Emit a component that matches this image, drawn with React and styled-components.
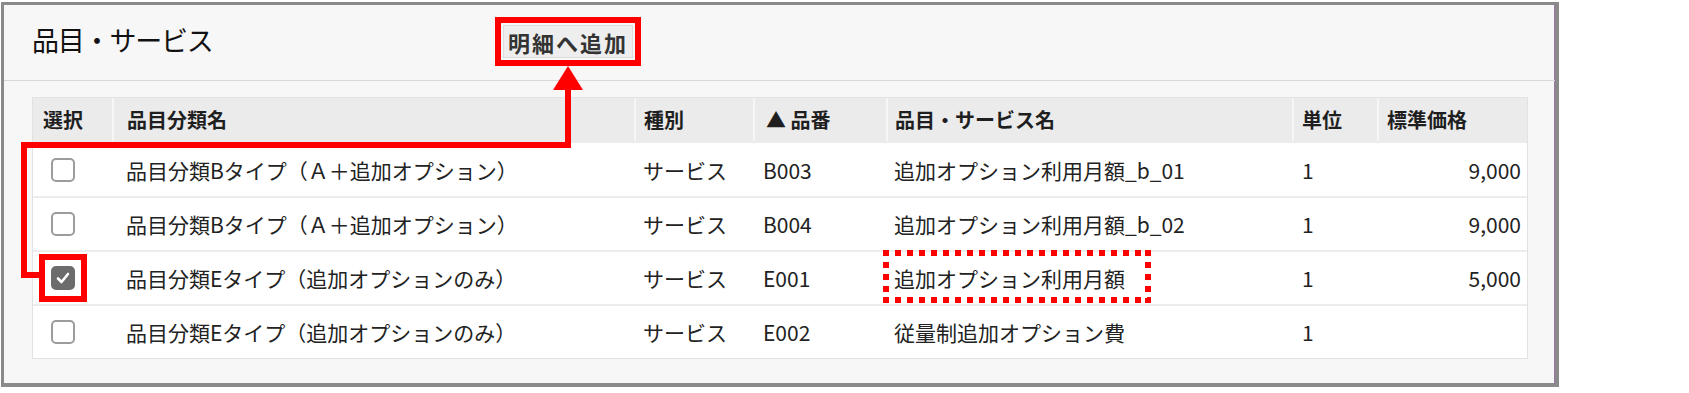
import React from "react";
import styled, { createGlobalStyle, css } from "styled-components";

const Global = createGlobalStyle`
  html, body { margin: 0; padding: 0; background: #ffffff; }
  body { font-family: "Noto Sans CJK JP", "Noto Sans", sans-serif; color: #1c1c1c; }
`;

const COLS = "79px 522px 119px 133px 406px 85px 150px";

const Page = styled.div`
  position: relative;
  width: 1689px;
  height: 393px;
  padding: 2px 0 0 1px;
  box-sizing: border-box;
`;

const Panel = styled.section`
  width: 1558px;
  height: 385px;
  box-sizing: border-box;
  background: #f7f7f7;
  border: 3px solid #8a8a8a;
  border-right-width: 4px;
  border-bottom-width: 4px;
  box-shadow: inset -1px 0 0 #9c76a6;
  display: flex;
  flex-direction: column;
`;

const PanelHeader = styled.header`
  height: 76px;
  box-sizing: border-box;
  border-bottom: 1px solid #d8d8d8;
  display: flex;
  align-items: flex-start;
  padding: 20px 0 0 28px;
`;

const Title = styled.h2`
  flex: 0 0 471px;
  margin: 0;
  font-size: 27px;
  line-height: 30px;
  font-weight: 400;
  letter-spacing: -1.2px;
  color: #111;
  white-space: nowrap;
`;

/* red annotation frame drawn around a control, not affecting layout */
const RedFrame = styled.span`
  display: inline-flex;
  border: 6px solid #ff0000;
  padding: ${(p) => p.$gap}px;
  margin: -${(p) => p.$gap + 6}px;
`;

const AddButton = styled.button`
  height: 33px;
  padding: 0 4px;
  box-sizing: border-box;
  background: #eeeeee;
  border: 1px solid #dcdcdc;
  border-radius: 0;
  font-family: inherit;
  font-size: 22px;
  line-height: 1;
  font-weight: 700;
  letter-spacing: 2px;
  color: #333;
  white-space: nowrap;
`;

const Body = styled.div`
  padding: 16px 0 0 28px;
`;

const Table = styled.div`
  width: 1496px;
  box-sizing: border-box;
  border: 1px solid #e2e2e2;
  background: #ffffff;
`;

const Row = styled.div`
  display: grid;
  grid-template-columns: ${COLS};
  height: ${(p) => (p.$head ? "43px" : "54px")};
  background: ${(p) => (p.$head ? "#ebebeb" : "#ffffff")};
  ${(p) =>
    !p.$head &&
    css`
      border-top: 2px solid #ececec;
      box-sizing: border-box;
    `}
  ${(p) =>
    p.$first &&
    css`
      height: 55px;
    `}
`;

const HeadCell = styled.div`
  display: flex;
  align-items: center;
  padding-left: ${(p) => p.$pad || 10}px;
  font-size: 20px;
  font-weight: 700;
  color: #1f1f1f;
  white-space: nowrap;
  & + & {
    border-left: 2px solid #f6f6f6;
  }
`;

const Cell = styled.div`
  display: flex;
  align-items: center;
  justify-content: ${(p) => (p.$right ? "flex-end" : "flex-start")};
  padding-left: ${(p) => (p.$right ? 0 : p.$pad || 10)}px;
  padding-right: ${(p) => (p.$right ? 6 : 0)}px;
  font-size: 21px;
  color: #222;
  white-space: nowrap;
`;

const Check = styled.span`
  width: 24px;
  height: 24px;
  box-sizing: border-box;
  border-radius: 5px;
  border: 2px solid ${(p) => (p.$on ? "#6c6c6c" : "#9c9c9c")};
  background: ${(p) => (p.$on ? "#6c6c6c" : "#ffffff")};
  display: inline-flex;
  align-items: center;
  justify-content: center;
`;

const Marked = styled.span`
  position: relative;
  display: inline-block;
  line-height: 30px;
  &::after {
    content: "";
    position: absolute;
    left: -11px;
    right: -26px;
    top: -13px;
    bottom: -10px;
    background:
      repeating-linear-gradient(to right, #ff0000 0 6px, transparent 6px 12px) top left / 100% 6px no-repeat,
      repeating-linear-gradient(to right, #ff0000 0 6px, transparent 6px 12px) bottom left / 100% 6px no-repeat,
      repeating-linear-gradient(to bottom, #ff0000 0 6px, transparent 6px 12px) top left / 6px 100% no-repeat,
      repeating-linear-gradient(to bottom, #ff0000 0 6px, transparent 6px 12px) top right / 6px 100% no-repeat;
    pointer-events: none;
  }
`;

const Overlay = styled.svg`
  position: absolute;
  left: 0;
  top: 0;
  pointer-events: none;
`;

const rows = [
  { cat: "品目分類Bタイプ（Ａ＋追加オプション）", kind: "サービス", code: "B003", name: "追加オプション利用月額_b_01", unit: "1", price: "9,000" },
  { cat: "品目分類Bタイプ（Ａ＋追加オプション）", kind: "サービス", code: "B004", name: "追加オプション利用月額_b_02", unit: "1", price: "9,000" },
  { cat: "品目分類Eタイプ（追加オプションのみ）", kind: "サービス", code: "E001", name: "追加オプション利用月額", unit: "1", price: "5,000", checked: true },
  { cat: "品目分類Eタイプ（追加オプションのみ）", kind: "サービス", code: "E002", name: "従量制追加オプション費", unit: "1", price: "" },
];

function CheckMark() {
  return (
    <svg width="16" height="16" viewBox="0 0 16 16">
      <path d="M3 8.5 L6.5 12 L13 4" fill="none" stroke="#ffffff" strokeWidth="2.6" strokeLinecap="round" strokeLinejoin="round" />
    </svg>
  );
}

export default function App() {
  return (
    <Page>
      <Global />
      <Panel>
        <PanelHeader>
          <Title>品目・サービス</Title>
          <RedFrame $gap={2}>
            <AddButton>明細へ追加</AddButton>
          </RedFrame>
        </PanelHeader>
        <Body>
          <Table>
            <Row $head>
              <HeadCell $pad={10}>選択</HeadCell>
              <HeadCell $pad={13}>品目分類名</HeadCell>
              <HeadCell $pad={8}>種別</HeadCell>
              <HeadCell $pad={11}>▲ 品番</HeadCell>
              <HeadCell $pad={7}>品目・サービス名</HeadCell>
              <HeadCell $pad={8}>単位</HeadCell>
              <HeadCell $pad={8}>標準価格</HeadCell>
            </Row>
            {rows.map((r, i) => (
              <Row key={i} $first={i === 0}>
                <Cell $pad={18}>
                  {r.checked ? (
                    <RedFrame $gap={6}>
                      <Check $on>
                        <CheckMark />
                      </Check>
                    </RedFrame>
                  ) : (
                    <Check />
                  )}
                </Cell>
                <Cell $pad={14}>{r.cat}</Cell>
                <Cell $pad={9}>{r.kind}</Cell>
                <Cell $pad={10}>{r.code}</Cell>
                <Cell $pad={8}>{r.checked ? <Marked>{r.name}</Marked> : r.name}</Cell>
                <Cell $pad={10}>{r.unit}</Cell>
                <Cell $right>{r.price}</Cell>
              </Row>
            ))}
          </Table>
        </Body>
      </Panel>
      <Overlay width="1689" height="393" viewBox="0 0 1689 393">
        <path d="M39 275 H24 V145 H568 V88" fill="none" stroke="#ff0000" strokeWidth="6" strokeLinejoin="miter" />
        <polygon points="553,90 583,90 568,66" fill="#ff0000" />
      </Overlay>
    </Page>
  );
}
